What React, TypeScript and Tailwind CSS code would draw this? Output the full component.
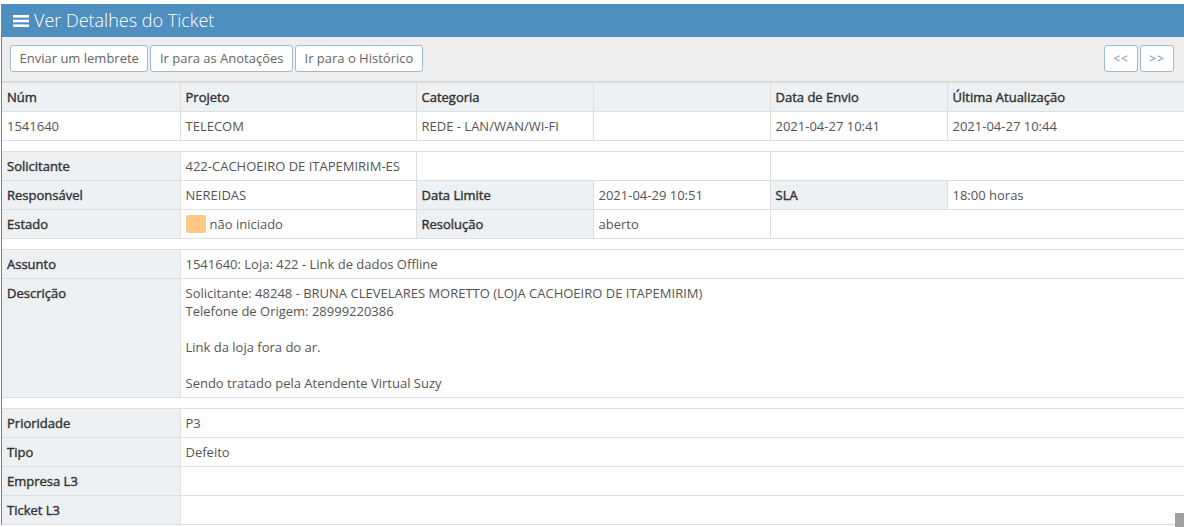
import React from 'react';

const LABEL = 'bg-[#edf1f4] text-[#333] font-normal [-webkit-text-stroke:0.4px_#333]';
const CELL = 'border border-[#dedede] px-[5px] py-[5px] align-top leading-[18px] first:border-l-0';

function Label({ children, colSpan }: { children?: React.ReactNode; colSpan?: number }) {
  return (
    <td colSpan={colSpan} className={`${CELL} ${LABEL}`}>
      {children}
    </td>
  );
}

function Value({ children, colSpan }: { children?: React.ReactNode; colSpan?: number }) {
  return (
    <td colSpan={colSpan} className={`${CELL} bg-white text-[#555]`}>
      {children}
    </td>
  );
}

function Spacer() {
  return (
    <tr>
      <td colSpan={6} className="h-[11px] border border-l-0 border-[#dedede] bg-white p-0" />
    </tr>
  );
}

function Btn({ children }: { children: React.ReactNode }) {
  return (
    <button className="h-[27px] rounded-[3px] border border-[#9dbad6] bg-white px-[8.5px] text-[13px] text-[#666]">
      {children}
    </button>
  );
}

export default function App() {
  return (
    <div
      className="relative h-[527px] w-[1184px] overflow-hidden bg-white pt-1 text-[13px]"
      style={{ fontFamily: '"Open Sans", "Liberation Sans", sans-serif' }}
    >
      <div className="ml-px border-l border-[#4f8fc0]">
        {/* Title bar */}
        <div className="flex h-[33px] items-center gap-[5px] bg-[#4f8fc0] pl-[11px] text-white">
          <svg width="16" height="14" viewBox="0 0 16 14" fill="white">
            <rect x="0" y="1" width="16" height="2.6" />
            <rect x="0" y="5.7" width="16" height="2.6" />
            <rect x="0" y="10.4" width="16" height="2.6" />
          </svg>
          <span className="text-[18px] font-light">Ver Detalhes do Ticket</span>
        </div>

        {/* Toolbar */}
        <div className="flex h-[45px] items-start justify-between border-b border-[#d6d6d6] bg-[#eeeeee] pl-[8px] pr-[10px] pt-[8px]">
          <div className="flex gap-[2px]">
            <Btn>Enviar um lembrete</Btn>
            <Btn>Ir para as Anotações</Btn>
            <Btn>Ir para o Histórico</Btn>
          </div>
          <div className="flex gap-[2px]">
            <button className="h-[27px] w-[34px] rounded-[3px] border border-[#9dbad6] bg-white text-[12px] tracking-[1px] text-[#6a8fb8]">
              &lt;&lt;
            </button>
            <button className="h-[27px] w-[34px] rounded-[3px] border border-[#9dbad6] bg-white text-[12px] tracking-[1px] text-[#6a8fb8]">
              &gt;&gt;
            </button>
          </div>
        </div>

        <table className="w-[1182px] table-fixed border-collapse">
          <colgroup>
            <col className="w-[178px]" />
            <col className="w-[236px]" />
            <col className="w-[177px]" />
            <col className="w-[177px]" />
            <col className="w-[177px]" />
            <col className="w-[237px]" />
          </colgroup>
          <tbody>
            <tr>
              <Label>Núm</Label>
              <Label>Projeto</Label>
              <Label>Categoria</Label>
              <Label />
              <Label>Data de Envio</Label>
              <Label>Última Atualização</Label>
            </tr>
            <tr>
              <Value>1541640</Value>
              <Value>TELECOM</Value>
              <Value>REDE - LAN/WAN/WI-FI</Value>
              <Value />
              <Value>2021-04-27 10:41</Value>
              <Value>2021-04-27 10:44</Value>
            </tr>
            <Spacer />
            <tr>
              <Label>Solicitante</Label>
              <Value>422-CACHOEIRO DE ITAPEMIRIM-ES</Value>
              <Value colSpan={2} />
              <Value colSpan={2} />
            </tr>
            <tr>
              <Label>Responsável</Label>
              <Value>NEREIDAS</Value>
              <Label>Data Limite</Label>
              <Value>2021-04-29 10:51</Value>
              <Label>SLA</Label>
              <Value>18:00 horas</Value>
            </tr>
            <tr>
              <Label>Estado</Label>
              <Value>
                <span className="flex items-center gap-[4px]">
                  <span className="inline-block h-[18px] w-[20px] rounded-[3px] bg-[#ffc985]" />
                  não iniciado
                </span>
              </Value>
              <Label>Resolução</Label>
              <Value>aberto</Value>
              <Value colSpan={2} />
            </tr>
            <Spacer />
            <tr>
              <Label>Assunto</Label>
              <Value colSpan={5}>1541640: Loja: 422 - Link de dados Offline</Value>
            </tr>
            <tr>
              <Label>Descrição</Label>
              <Value colSpan={5}>
                Solicitante: 48248 - BRUNA CLEVELARES MORETTO (LOJA CACHOEIRO DE ITAPEMIRIM)
                <br />
                Telefone de Origem: 28999220386
                <br />
                <br />
                Link da loja fora do ar.
                <br />
                <br />
                Sendo tratado pela Atendente Virtual Suzy
              </Value>
            </tr>
            <Spacer />
            <tr>
              <Label>Prioridade</Label>
              <Value colSpan={5}>P3</Value>
            </tr>
            <tr>
              <Label>Tipo</Label>
              <Value colSpan={5}>Defeito</Value>
            </tr>
            <tr>
              <Label>Empresa L3</Label>
              <Value colSpan={5} />
            </tr>
            <tr>
              <Label>Ticket L3</Label>
              <Value colSpan={5} />
            </tr>
          </tbody>
        </table>
      </div>

      {/* scrollbar corner */}
      <div className="absolute bottom-0 right-0 h-[14px] w-[9px] bg-[#a0a0a0]" />
    </div>
  );
}
